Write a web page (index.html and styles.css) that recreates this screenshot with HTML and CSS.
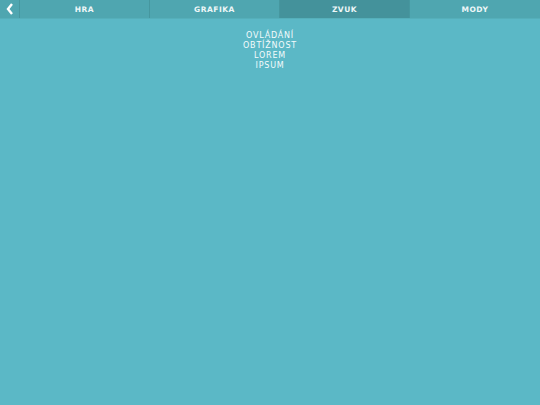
FILE: index.html
```html
<!DOCTYPE html>
<html>
<head>
<meta charset="utf-8">
<link rel="stylesheet" href="styles.css">
</head>
<body>
<div class="bar">
  <div class="back"><svg width="8" height="12" viewBox="0 0 8 12"><path d="M6 1 L2 6 L6 11" fill="none" stroke="#fff" stroke-width="2.4" stroke-linejoin="miter"/></svg></div>
  <div class="tab">HRA</div>
  <div class="tab">GRAFIKA</div>
  <div class="tab active">ZVUK</div>
  <div class="tab last">MODY</div>
</div>
<div class="menu">
  <div>OVLÁDÁNÍ</div>
  <div>OBTÍŽNOST</div>
  <div>LOREM</div>
  <div>IPSUM</div>
</div>
</body>
</html>
```
FILE: styles.css
```css
html, body { margin: 0; padding: 0; }
body {
  width: 540px; height: 405px;
  background: #5bb8c6;
  font-family: "DejaVu Sans", Verdana, sans-serif;
  color: #fff;
  overflow: hidden;
}
.bar {
  display: flex;
  height: 18px;
  background: #4fa6b0;
  box-shadow: 0 1px 0 #55afba;
}
.back {
  width: 19px;
  border-right: 1px solid #46979f;
  display: flex; align-items: center; justify-content: center;
}
.tab {
  width: 129px;
  border-right: 1px solid #46979f;
  display: flex; align-items: center; justify-content: center;
  font-size: 7.5px; font-weight: bold; letter-spacing: 0.5px;
  color: #eef7f8;
}
.tab.last { flex: 1; border-right: none; }
.tab.active { background: #44929b; }
.menu {
  margin-top: 13px;
  display: flex; flex-direction: column; align-items: center;
  font-size: 8px; line-height: 10px; letter-spacing: 0.8px;
  color: #f4fbfc;
}
```
